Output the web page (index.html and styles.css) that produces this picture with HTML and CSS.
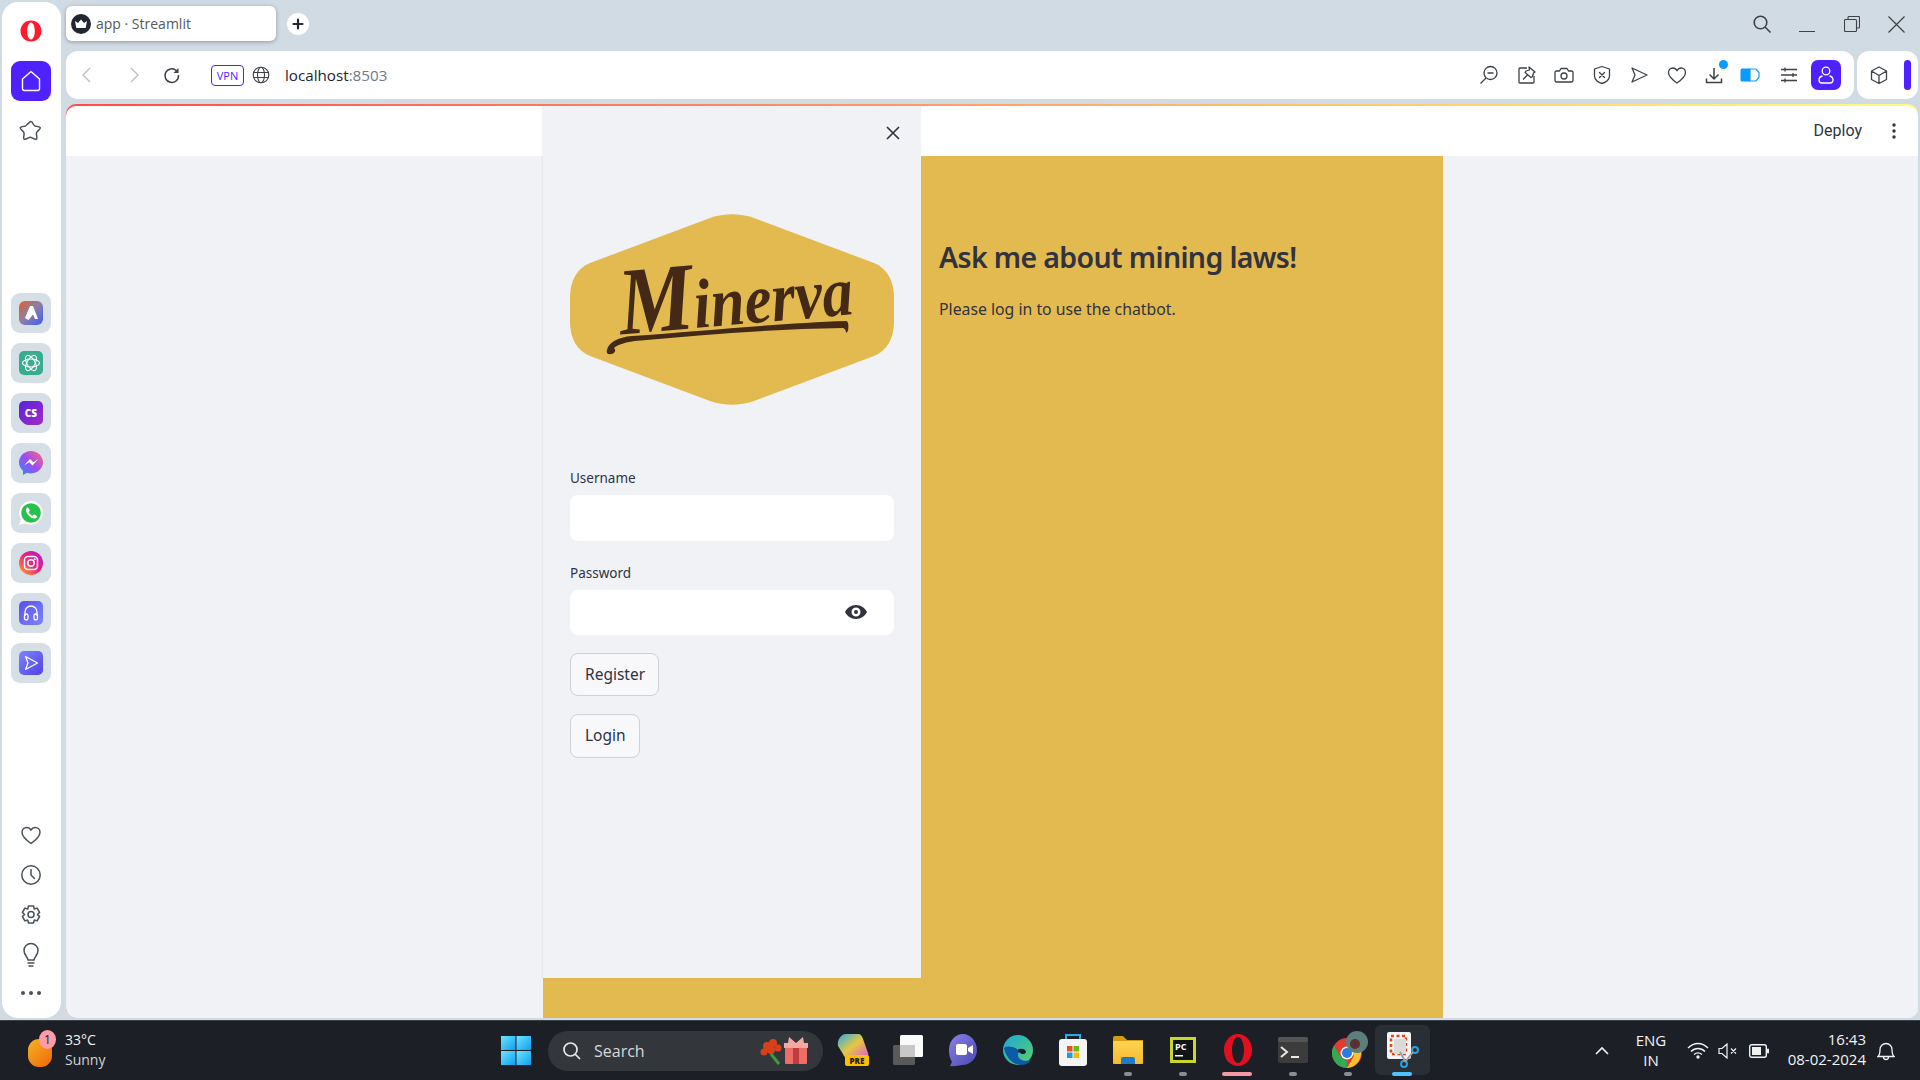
FILE: index.html
```html
<!DOCTYPE html>
<html lang="en">
<head>
  <meta charset="UTF-8">
  <title>app · Streamlit</title>
  <meta name="viewport" content="width=device-width, initial-scale=1.0">
  <link rel="stylesheet" href="styles.css">
</head>
<body>

<svg class="defs" width="0" height="0">
  <defs>
    <linearGradient id="gAria" x1="0" y1="0" x2="1" y2="1"><stop offset="0" stop-color="#e0602c"/><stop offset=".5" stop-color="#8a7fa8"/><stop offset="1" stop-color="#3a5cff"/></linearGradient>
    <linearGradient id="gCs" x1="0" y1="0" x2="1" y2="1"><stop offset="0" stop-color="#5a22d8"/><stop offset="1" stop-color="#a02ac8"/></linearGradient>
    <linearGradient id="gMsg" x1="0" y1="1" x2="1" y2="0"><stop offset="0" stop-color="#2a8cff"/><stop offset=".5" stop-color="#a04cf0"/><stop offset="1" stop-color="#ff6a70"/></linearGradient>
    <linearGradient id="gIg" x1="0" y1="1" x2="1" y2="0"><stop offset="0" stop-color="#ffb020"/><stop offset=".5" stop-color="#f0207c"/><stop offset="1" stop-color="#a020d8"/></linearGradient>
    <linearGradient id="gBlue" x1="0" y1="0" x2="1" y2="1"><stop offset="0" stop-color="#5a50f0"/><stop offset="1" stop-color="#7c84ff"/></linearGradient>
    <linearGradient id="gBlue2" x1="0" y1="0" x2="1" y2="1"><stop offset="0" stop-color="#7c84ff"/><stop offset="1" stop-color="#5240e8"/></linearGradient>
    <linearGradient id="gWin" x1="0" y1="0" x2="1" y2="1"><stop offset="0" stop-color="#6fe6ff"/><stop offset="1" stop-color="#0d9cf0"/></linearGradient>
    <linearGradient id="gCop" x1="0" y1="0" x2="1" y2="1"><stop offset="0" stop-color="#2aa8f0"/><stop offset=".5" stop-color="#e8c83c"/><stop offset="1" stop-color="#d85ce0"/></linearGradient>
    <linearGradient id="gMeet" x1="0" y1="0" x2="1" y2="1"><stop offset="0" stop-color="#8a80e8"/><stop offset="1" stop-color="#4a48b0"/></linearGradient>
    <linearGradient id="gEdge" x1="0" y1="0" x2="1" y2="1"><stop offset="0" stop-color="#1ea8d8"/><stop offset="1" stop-color="#58d068"/></linearGradient>
    <linearGradient id="gFolder" x1="0" y1="0" x2="0" y2="1"><stop offset="0" stop-color="#ffd452"/><stop offset="1" stop-color="#f6b92c"/></linearGradient>
  </defs>
</svg>

<div class="screen">
  <!-- opera rail -->
  <nav class="rail">
    <div class="rail-logo">
      <svg width="26" height="26" viewBox="0 0 26 26"><path fill="#ff1b2d" fill-rule="evenodd" d="M13 2.500C6.900 2.500 2.500 7.200 2.500 13s4.400 10.500 10.500 10.500S23.500 18.800 23.500 13 19.100 2.500 13 2.500zm0 2c2.200 0 3.800 3.800 3.800 8.500s-1.600 8.500-3.800 8.500-3.800-3.800-3.800-8.500 1.600-8.500 3.800-8.500z"/></svg>
    </div>
    <div class="rail-home">
      <svg width="22" height="24" viewBox="0 0 22 24" fill="none" stroke="#fff" stroke-width="1.400" stroke-linejoin="round"><path d="M2.500 10 11 2.500 19.500 10v9.500a2 2 0 0 1-2 2h-13a2 2 0 0 1-2-2z"/></svg>
    </div>
    <div class="rail-icon rail-star">
      <svg width="24" height="24" viewBox="0 0 24 24" fill="none" stroke="#4a515a" stroke-width="1.500" stroke-linejoin="round"><path d="M12 2.500c1 0 1.500 1 2.300 2.800.6 1.300 1 1.700 2.300 1.900 2.500.4 4.400.5 4.700 1.500.3 1-1.200 2.100-3 3.800-.9.900-1.100 1.400-.9 2.600.4 2.500.9 4.500 0 5.100-.9.600-2.600-.4-4.800-1.600-1.100-.6-1.600-.6-2.700 0-2.200 1.200-3.900 2.200-4.800 1.600-.9-.6-.4-2.600 0-5.100.2-1.200 0-1.700-.9-2.600-1.800-1.700-3.300-2.800-3-3.800.3-1 2.200-1.100 4.700-1.500 1.300-.2 1.700-.6 2.300-1.900C10.500 3.500 11 2.500 12 2.500z"/></svg>
    </div>

    <div class="rail-apps">
      <div class="app-tile"><svg width="24" height="24" viewBox="0 0 24 24"><rect width="24" height="24" rx="6" fill="url(#gAria)"/><path fill="#fff" d="M11 5h3l5 13h-3l-2-4.500L9.500 19 6 17z"/></svg></div>
      <div class="app-tile"><svg width="24" height="24" viewBox="0 0 24 24"><rect width="24" height="24" rx="5" fill="#36ad8e"/><g fill="none" stroke="#fff" stroke-width="1.100"><ellipse cx="12" cy="12" rx="8.500" ry="4"/><ellipse cx="12" cy="12" rx="8.500" ry="4" transform="rotate(60 12 12)"/><ellipse cx="12" cy="12" rx="8.500" ry="4" transform="rotate(120 12 12)"/></g></svg></div>
      <div class="app-tile"><svg width="24" height="24" viewBox="0 0 24 24"><path fill="url(#gCs)" d="M5 0h14a5 5 0 0 1 5 5v14a5 5 0 0 1-5 5H9c-3 0-9-5-9-9V5a5 5 0 0 1 5-5z"/><text class="cs-text" x="12" y="16">CS</text></svg></div>
      <div class="app-tile"><svg width="24" height="24" viewBox="0 0 24 24"><path fill="url(#gMsg)" d="M12 0C5.400 0 0 5 0 11.300c0 3.400 1.500 6.300 4 8.400V24l4-2.200c1.300.4 2.600.6 4 .6 6.600 0 12-5 12-11.100S18.600 0 12 0z"/><path fill="#fff" d="m5 14.500 6-6.500 3.300 3.300L19.500 8l-6 6.500-3.300-3.300z"/></svg></div>
      <div class="app-tile"><svg width="24" height="24" viewBox="0 0 24 24"><path fill="#fff" d="M12 0a11.800 11.800 0 0 0-10 18L0 24l6.300-1.700A11.900 11.900 0 1 0 12 0z"/><circle cx="12" cy="12" r="9.800" fill="#27c24c"/><path fill="#fff" d="M8.500 6.500c-.5 0-1.500.8-1.500 2.500 0 3.500 4.500 8.500 8.500 8.500 1.500 0 2.500-1 2.500-2 0-.5-2.500-2-3-2s-1 1.200-1.500 1.200c-1 0-3.700-2.500-3.700-3.700 0-.5 1-1 1-1.500s-1.500-3-2.300-3z"/></svg></div>
      <div class="app-tile"><svg width="24" height="24" viewBox="0 0 24 24"><circle cx="12" cy="12" r="12" fill="url(#gIg)"/><rect x="5.500" y="5.500" width="13" height="13" rx="3.500" fill="none" stroke="#fff" stroke-width="1.500"/><circle cx="12" cy="12" r="3.200" fill="none" stroke="#fff" stroke-width="1.500"/><circle cx="15.800" cy="8.200" r=".9" fill="#fff"/></svg></div>
      <div class="app-tile"><svg width="24" height="24" viewBox="0 0 24 24"><rect width="24" height="24" rx="5" fill="url(#gBlue)"/><g fill="none" stroke="#fff" stroke-width="1.300"><path d="M6 15v-4a6 6 0 0 1 12 0v4"/><rect x="5.500" y="13" width="3.500" height="6" rx="1.700"/><rect x="15" y="13" width="3.500" height="6" rx="1.700"/></g></svg></div>
      <div class="app-tile"><svg width="24" height="24" viewBox="0 0 24 24"><rect width="24" height="24" rx="5" fill="url(#gBlue2)"/><path fill="none" stroke="#fff" stroke-width="1.300" stroke-linejoin="round" d="m6.500 5.500 12 6.500-12 6.500 2.500-6.500z"/></svg></div>
    </div>

    <div class="rail-bottom">
      <div class="rail-icon"><svg width="24" height="24" viewBox="0 0 24 24" fill="none" stroke="#4a515a" stroke-width="1.500" stroke-linejoin="round"><path d="M12 20.500C7 17 3 13.500 3 9.300 3 6.400 5.200 4.500 7.700 4.500c1.900 0 3.400 1 4.300 2.700.9-1.700 2.400-2.700 4.300-2.700 2.500 0 4.700 1.900 4.700 4.800 0 4.200-4 7.700-9 11.200z"/></svg></div>
      <div class="rail-icon"><svg width="24" height="24" viewBox="0 0 24 24" fill="none" stroke="#4a515a" stroke-width="1.500" stroke-linecap="round"><circle cx="12" cy="12" r="9.200"/><path d="M12 6.500V12l3.500 3.500"/></svg></div>
      <div class="rail-icon"><svg width="24" height="24" viewBox="0 0 24 24" fill="none" stroke="#4a515a" stroke-width="1.500" stroke-linejoin="round"><path d="M9.500 3h5l.8 3 2.800-.9 2.500 4.300-2.100 2.100 2.100 2.100-2.500 4.300-2.800-.9-.8 3h-5l-.8-3-2.800.9-2.500-4.300 2.100-2.100-2.100-2.100 2.500-4.300 2.800.9z"/><circle cx="12" cy="11.500" r="3"/></svg></div>
      <div class="rail-icon"><svg width="24" height="28" viewBox="0 0 24 28" fill="none" stroke="#4a515a" stroke-width="1.500" stroke-linecap="round"><path d="M9 19c0-3-4-4.500-4-9.500a7 7 0 0 1 14 0c0 5-4 6.500-4 9.500z"/><path d="M9 22h6M10 25h4"/></svg></div>
      <div class="rail-icon rail-dots"><i></i><i></i><i></i></div>
    </div>
  </nav>

  <div class="browser">
    <div class="tabstrip">
      <div class="tab">
        <svg class="favicon" width="20" height="20" viewBox="0 0 20 20"><circle cx="10" cy="10" r="10" fill="#22262e"/><path fill="#fff" d="M4 7l3 2 3-3.500L13 9l3-2-1.300 7H5.300z"/></svg>
        <span>app · Streamlit</span>
      </div>
      <div class="new-tab">
        <svg width="12" height="12" viewBox="0 0 12 12" stroke="#22262e" stroke-width="2.200" stroke-linecap="round"><path d="M6 1.500v9M1.500 6h9"/></svg>
      </div>
      <div class="window-btns">
        <div class="win-btn"><svg width="20" height="20" viewBox="0 0 20 20" fill="none" stroke="#3c4248" stroke-width="1.600"><circle cx="8.500" cy="8.500" r="6.300"/><path d="m13 13 5.500 5.500"/></svg></div>
        <div class="win-btn"><svg width="16" height="16" viewBox="0 0 16 16" fill="none" stroke="#3c4248" stroke-width="1"><path d="M0 15.500h16"/></svg></div>
        <div class="win-btn"><svg width="16" height="16" viewBox="0 0 16 16" fill="none" stroke="#3c4248" stroke-width="1.100"><rect x=".5" y="3.500" width="12" height="12" rx="1"/><path d="M4 3.500V1.500a1 1 0 0 1 1-1h9.500a1 1 0 0 1 1 1V11a1 1 0 0 1-1 1h-2"/></svg></div>
        <div class="win-btn"><svg width="17" height="17" viewBox="0 0 17 17" fill="none" stroke="#3c4248" stroke-width="1.200"><path d="m.5.500 16 16M16.500.500l-16 16"/></svg></div>
      </div>
    </div>

    <div class="toolbar-row">
      <div class="addressbar">
        <div class="nav-btn nav-back"><svg width="24" height="24" viewBox="0 0 24 24" fill="none" stroke="#b8bec4" stroke-width="1.300"><path d="m15 5-7 7 7 7"/></svg></div>
        <div class="nav-btn nav-fwd"><svg width="24" height="24" viewBox="0 0 24 24" fill="none" stroke="#b8bec4" stroke-width="1.300"><path d="m9 5 7 7-7 7"/></svg></div>
        <div class="nav-btn nav-reload"><svg width="24" height="24" viewBox="0 0 24 24" fill="none" stroke="#3c4248" stroke-width="1.500"><path d="M16.500 7.800A6.800 6.800 0 1 0 18.500 12"/><path fill="#3c4248" stroke="none" d="M18.500 5v5h-5z"/></svg></div>
        <div class="vpn-tag">VPN</div>
        <svg class="globe" width="18" height="18" viewBox="0 0 18 18" fill="none" stroke="#3c4248" stroke-width="1.100"><circle cx="9" cy="9" r="7.800"/><ellipse cx="9" cy="9" rx="3.500" ry="7.800"/><path d="M1.500 6.500h15M1.500 11.500h15"/></svg>
        <div class="url">localhost<span>:8503</span></div>
        <div class="tools">
          <div class="tool"><svg width="20" height="20" viewBox="0 0 20 20" fill="none" stroke="#3c4248" stroke-width="1.300"><circle cx="11.500" cy="8" r="6.500"/><path d="M8.500 8h6M7 13 1.500 18.500"/></svg></div>
          <div class="tool"><svg width="20" height="20" viewBox="0 0 20 20" fill="none" stroke="#3c4248" stroke-width="1.300" stroke-linejoin="round"><path d="M10 3H3a1 1 0 0 0-1 1v13a1 1 0 0 0 1 1h13a1 1 0 0 0 1-1v-6"/><path d="m12 2 6 5-1.500 1-1 3.500-1.500 1L8 7.500l1-1.500 3.500-1zM10.500 10 6 14.500"/></svg></div>
          <div class="tool"><svg width="20" height="20" viewBox="0 0 20 20" fill="none" stroke="#3c4248" stroke-width="1.300" stroke-linejoin="round"><path d="M2.500 6h3l1.500-2.500h6L14.500 6h3a1.500 1.500 0 0 1 1.500 1.500v8a1.500 1.500 0 0 1-1.500 1.500h-15A1.500 1.500 0 0 1 1 15.500v-8A1.500 1.500 0 0 1 2.500 6z"/><circle cx="10" cy="11" r="3"/></svg></div>
          <div class="tool"><svg width="20" height="20" viewBox="0 0 20 20" fill="none" stroke="#3c4248" stroke-width="1.300" stroke-linejoin="round"><path d="M10 1.500 17.500 4v7c0 3.500-3.500 6.500-7.500 7.500C6 17.500 2.500 14.500 2.500 11V4z"/><path stroke-linecap="round" d="m7.500 7.500 5 5M12.500 7.500l-5 5"/></svg></div>
          <div class="tool"><svg width="20" height="20" viewBox="0 0 20 20" fill="none" stroke="#3c4248" stroke-width="1.300" stroke-linejoin="round"><path d="m3 3 15 7-15 7 3-7z"/></svg></div>
          <div class="tool"><svg width="20" height="20" viewBox="0 0 20 20" fill="none" stroke="#3c4248" stroke-width="1.300" stroke-linejoin="round"><path d="M10 18C5 14.500 1.500 11.500 1.500 7.500c0-2.500 2-4.500 4.300-4.500 1.800 0 3.300 1 4.200 2.700C10.900 4 12.400 3 14.200 3c2.300 0 4.300 2 4.300 4.500 0 4-3.500 7-8.500 10.500z"/></svg></div>
          <div class="tool tool-dl"><svg width="20" height="20" viewBox="0 0 20 20" fill="none" stroke="#3c4248" stroke-width="1.500"><path d="M10 3v11M5.500 9.500 10 14l4.500-4.500M2.500 13.500v4h15v-4"/></svg><i class="dl-dot"></i></div>
          <div class="tool tool-vpnbat"><svg width="20" height="16" viewBox="0 0 20 16"><path fill="#0a9bff" d="M2 1.500h8v13H2a1.500 1.500 0 0 1-1.500-1.500V3A1.500 1.500 0 0 1 2 1.500z"/><path fill="#fff" stroke="#0a9bff" stroke-width="1.200" d="M10 2h6l3 3.500v5L16 14h-6z"/></svg></div>
          <div class="tool"><svg width="18" height="16" viewBox="0 0 18 16" fill="none" stroke="#3c4248" stroke-width="1.300"><path d="M1 2.500h16M1 8h16M1 13.500h16M5 .5v4M13 6v4M5 11.500v4" /></svg></div>
          <div class="profile"><svg width="20" height="20" viewBox="0 0 20 20" fill="none" stroke="#fff" stroke-width="1.300"><circle cx="10" cy="6" r="3.800"/><path d="M6.500 11C4 11.500 3 13 3 15c0 2 1 3 3 3h8c2 0 3-1 3-3 0-2-1-3.500-3.500-4"/></svg></div>
        </div>
      </div>
      <div class="sidebox">
        <svg width="20" height="20" viewBox="0 0 20 20" fill="none" stroke="#3c4248" stroke-width="1.300" stroke-linejoin="round"><path d="m10 2 7.500 4v8.500L10 18.500l-7.500-4V6zM2.500 6 10 10.500 17.500 6M10 10.500v8"/></svg>
        <i class="sidebox-bar"></i>
      </div>
    </div>

    <!-- streamlit page -->
    <div class="page">
      <header class="st-header">
        <span class="deploy">Deploy</span>
        <svg class="kebab" width="4" height="16" viewBox="0 0 4 16" fill="#31333f"><circle cx="2" cy="2" r="1.700"/><circle cx="2" cy="8" r="1.700"/><circle cx="2" cy="14" r="1.700"/></svg>
      </header>
      <main class="st-body">
        <section class="st-main">
          <h1>Ask me about mining laws!</h1>
          <p>Please log in to use the chatbot.</p>
        </section>
      </main>

      <aside class="st-sidebar">
        <div class="close-row">
          <svg width="14" height="14" viewBox="0 0 14 14" fill="none" stroke="#31333f" stroke-width="1.700"><path d="m1 1 12 12M13 1 1 13"/></svg>
        </div>
        <svg class="logo" width="324" height="191" viewBox="0 0 324 191">
          <path fill="#e3ba50" d="M140 4c15-5 29-5 44 0L304 49c13 5 20 18 20 34v25c0 16-7 29-20 34L184 187c-15 5-29 5-44 0L20 142C7 137 0 124 0 108V83c0-16 7-29 20-34z"/>
          <g fill="#452917">
            <text class="logo-text" x="50" y="110" textLength="234" lengthAdjust="spacingAndGlyphs" transform="rotate(-5 170 100)"><tspan class="logo-cap">M</tspan>inerva</text>
            <path d="M37 136c1-7 11-13 25-14 70-5 150-13 214-15 2 0 3 3 2 10l-2 2c0-3-1-4-3-5-70 1-140 7-208 13-8 1-16 3-21 7 3 3 0 6-3 6-3 1-5-1-4-4z"/>
          </g>
        </svg>
        <label class="field-label">Username</label>
        <div class="field field-user"></div>
        <label class="field-label">Password</label>
        <div class="field field-pass">
          <svg width="22" height="14" viewBox="0 0 22 14"><path fill="#31333f" fill-rule="evenodd" d="M11 0C6 0 2 3 0 7c2 4 6 7 11 7s9-3 11-7c-2-4-6-7-11-7zm0 11.500a4.500 4.500 0 1 1 0-9 4.500 4.500 0 0 1 0 9zM11 5a2 2 0 1 0 0 4 2 2 0 0 0 0-4z"/></svg>
        </div>
        <button class="st-btn btn-register">Register</button>
        <button class="st-btn btn-login">Login</button>
      </aside>
    </div>
  </div>
</div>

<footer class="taskbar">
  <div class="weather">
    <div class="sun"><i>1</i></div>
    <div class="weather-text">
      <div>33°C</div>
      <div class="sunny">Sunny</div>
    </div>
  </div>

  <svg class="winlogo" width="30" height="29" viewBox="0 0 30 29"><rect width="14.500" height="14" fill="url(#gWin)"/><rect x="15.500" width="14.500" height="14" fill="url(#gWin)"/><rect y="15" width="14.500" height="14" fill="url(#gWin)"/><rect x="15.500" y="15" width="14.500" height="14" fill="url(#gWin)"/></svg>

  <div class="searchbox">
    <svg width="20" height="20" viewBox="0 0 20 20" fill="none" stroke="#e8e8e8" stroke-width="1.700"><circle cx="8.500" cy="8.500" r="6.500"/><path d="m13 13 5 5"/></svg>
    <span>Search</span>
    <svg class="gift" width="50" height="30" viewBox="0 0 50 30"><g fill="#d8401c"><circle cx="8" cy="10" r="4"/><circle cx="14" cy="7" r="4"/><circle cx="5" cy="16" r="3.500"/><circle cx="12" cy="14" r="4"/><circle cx="19" cy="12" r="3.500"/></g><path d="M12 18l8 10" stroke="#3f9a3a" stroke-width="3"/><rect x="26" y="8" width="22" height="20" rx="1" fill="#ef6d68"/><rect x="34" y="8" width="6" height="20" fill="#c23a3a"/><rect x="25" y="7" width="24" height="5" fill="#f5a8a0"/><path d="M37 7 30 1l-1 6zM37 7l7-6 1 6z" fill="#f5a8a0"/></svg>
  </div>

  <div class="dock">
    <div class="dock-item"><svg width="32" height="36" viewBox="0 0 32 36"><path fill="url(#gCop)" d="M9 2h12c3 0 4 2 5 5l5 14c1 3-1 5-4 5H12c-3 0-5-1-6-4L1 14C0 8 4 2 9 2z"/><rect x="8" y="23" width="24" height="11" rx="2" fill="#fbc100"/><text class="pre-text" x="20" y="32">PRE</text></svg></div>
    <div class="dock-item"><svg width="30" height="30" viewBox="0 0 30 30"><rect x="0" y="10" width="22" height="20" rx="1.500" fill="#5a5a5a"/><rect x="7" y="0" width="23" height="22" rx="1.500" fill="#fafafa"/><rect x="7" y="10" width="15" height="12" fill="#c8c8c8"/></svg></div>
    <div class="dock-item"><svg width="30" height="34" viewBox="0 0 30 34"><path fill="url(#gMeet)" d="M15 1C7 1 1 8 1 17c0 5 1 9 3 12l-2 4c5 1 9-1 12-1 9 0 15-7 15-15S23 1 15 1z"/><rect x="8" y="11" width="11" height="11" rx="2" fill="#fff"/><path fill="#fff" d="m20 15 5-3v9l-5-3z"/></svg></div>
    <div class="dock-item"><svg width="30" height="30" viewBox="0 0 30 30"><circle cx="15" cy="15" r="15" fill="url(#gEdge)"/><path fill="#0c5aa8" d="M1 13c2 9 8 17 17 17 4 0 8-2 10-5-6 2-13 0-13-5 0-2 1-3 2-4-5-4-12-6-16-3z"/><path fill="#1c2026" d="M16 14c4-1 7 1 7 3s-4 3-6 1-3-3-1-4z"/></svg></div>
    <div class="dock-item"><svg width="30" height="34" viewBox="0 0 30 34"><path fill="none" stroke="#2aa8e8" stroke-width="2" d="M8 7V2h14v5"/><rect x="1" y="6" width="28" height="27" rx="3" fill="#f4f4f4"/><rect x="9" y="13" width="5.500" height="5.500" fill="#e8501c"/><rect x="15.500" y="13" width="5.500" height="5.500" fill="#6cb820"/><rect x="9" y="19.500" width="5.500" height="5.500" fill="#1c9ce8"/><rect x="15.500" y="19.500" width="5.500" height="5.500" fill="#fbb800"/></svg></div>
    <div class="dock-item"><svg width="30" height="28" viewBox="0 0 30 28"><path fill="#d49a10" d="M0 2a2 2 0 0 1 2-2h8l4 4h16v6H0z"/><rect y="5" width="30" height="23" rx="1" fill="url(#gFolder)"/><path fill="#1c7cc8" d="M8 28v-5a2 2 0 0 1 2-2h10a2 2 0 0 1 2 2v5z"/></svg></div>
    <div class="dock-item"><svg width="26" height="26" viewBox="0 0 26 26"><rect width="26" height="26" fill="#c8d828"/><rect x="3" y="3" width="20" height="20" fill="#101418"/><text class="pc-text" x="5" y="13">PC</text><rect x="5" y="18" width="8" height="1.500" fill="#fff"/></svg></div>
    <div class="dock-item"><svg width="28" height="32" viewBox="0 0 28 32"><path fill="#e01020" fill-rule="evenodd" d="M14 0C6 0 0 7 0 16s6 16 14 16 14-7 14-16S22 0 14 0zm0 3c3.500 0 6 6 6 13s-2.500 13-6 13-6-6-6-13 2.500-13 6-13z"/></svg></div>
    <div class="dock-item"><svg width="30" height="26" viewBox="0 0 30 26"><rect width="30" height="26" rx="2" fill="#3c3c3c"/><rect width="30" height="5" rx="2" fill="#555"/><path fill="none" stroke="#e8e8e8" stroke-width="2" d="m3 10 6 5-6 5"/><path stroke="#e8e8e8" stroke-width="2" d="M13 20h8"/></svg></div>
    <div class="dock-item dock-chrome"><svg width="38" height="38" viewBox="0 0 38 38"><g transform="translate(0 6)"><circle cx="15" cy="16" r="15" fill="#e33b2e"/><path fill="#34a853" d="M15 31A15 15 0 0 1 2 8.500L9 20l6 4z"/><path fill="#fbc02d" d="M15 31l7-12-2-5h9a15 15 0 0 1-14 17z"/><circle cx="15" cy="16" r="6.500" fill="#fff"/><circle cx="15" cy="16" r="5" fill="#2a7be4"/></g><circle cx="25" cy="11" r="11" fill="#5c7f7c"/><circle cx="23" cy="13" r="5" fill="#5a3030"/></svg></div>
    <div class="dock-item dock-active"><svg width="32" height="36" viewBox="0 0 32 36"><rect x="0" y="0" width="24" height="27" rx="2" fill="#f4f4f4"/><rect x="4" y="4" width="15" height="18" fill="none" stroke="#d84a20" stroke-width="2.500" stroke-dasharray="3 2.500"/><rect x="7" y="7" width="12" height="15" fill="#dadada"/><g fill="none" stroke="#2aa0e0" stroke-width="2"><circle cx="28" cy="18" r="3"/><circle cx="17" cy="32" r="3"/><path d="M26 20 18 30M13 20l5 9" stroke="#9aa0a6"/></g></svg></div>
  </div>

  <div class="tray">
    <svg class="chevron" width="14" height="9" viewBox="0 0 14 9" fill="none" stroke="#f2f2f2" stroke-width="1.600"><path d="m1 8 6-6 6 6"/></svg>
    <div class="lang"><div>ENG</div><div>IN</div></div>
    <svg class="tray-wifi" width="22" height="17" viewBox="0 0 22 17" fill="none" stroke="#f2f2f2" stroke-width="1.400"><path d="M1 6c6-6 14-6 20 0M4 9.500c4-4 10-4 14 0M7 12.500c2.500-2 5.500-2 8 0"/><circle cx="11" cy="15" r="1" fill="#f2f2f2"/></svg>
    <svg class="tray-vol" width="20" height="16" viewBox="0 0 20 16" fill="none" stroke="#f2f2f2" stroke-width="1.200"><path d="M1 5.500h3L9 1v14l-5-4.500H1zM13 5.500l5 5M18 5.500l-5 5"/></svg>
    <svg class="tray-bat" width="20" height="14" viewBox="0 0 20 14"><rect x=".7" y=".7" width="16.600" height="12.600" rx="2" fill="none" stroke="#f2f2f2" stroke-width="1.400"/><rect x="3" y="3" width="9" height="8" fill="#f2f2f2"/><rect x="18" y="4.500" width="2" height="5" rx="1" fill="#f2f2f2"/></svg>
    <div class="clock"><div>16:43</div><div>08-02-2024</div></div>
    <svg class="tray-bell" width="18" height="20" viewBox="0 0 18 20" fill="none" stroke="#f2f2f2" stroke-width="1.300"><path d="M1 15.500c2-2 2-4 2-7a6 6 0 0 1 12 0c0 3 0 5 2 7zM6.500 16a2.500 2.500 0 0 0 5 0"/></svg>
  </div>
</footer>

</body>
</html>
```

FILE: styles.css
```css
* {
  box-sizing: border-box;
}
html, body {
  margin: 0;
  height: 1080px;
  overflow: hidden;
}
body {
  background: #d1dbe4;
  font-family: "Open Sans", sans-serif;
  color: #31333f;
}
svg {
  display: block;
  flex-shrink: 0;
}
.defs {
  position: absolute;
}

.screen {
  display: flex;
  height: 1020px;
}

/* left rail */
.rail {
  width: 59px;
  height: 1016px;
  margin: 2px 0 0 2px;
  padding: 16px 1px 0 0;
  background: #fff;
  border-radius: 16px;
  display: flex;
  flex-direction: column;
  align-items: center;
}
.rail-logo {
  height: 26px;
}
.rail-home {
  width: 40px;
  height: 40px;
  margin-top: 17px;
  background: #5021ff;
  border-radius: 9px;
  display: flex;
  align-items: center;
  justify-content: center;
}
.rail-icon {
  width: 40px;
  height: 40px;
  display: flex;
  align-items: center;
  justify-content: center;
}
.rail-star {
  margin-top: 10px;
}
.rail-apps {
  margin-top: 142px;
  display: flex;
  flex-direction: column;
  gap: 10px;
}
.app-tile {
  width: 40px;
  height: 40px;
  background: #d5dfe5;
  border-radius: 9px;
  display: flex;
  align-items: center;
  justify-content: center;
}
.cs-text {
  font: 800 10px "Open Sans", sans-serif;
  fill: #fff;
  text-anchor: middle;
}
.rail-bottom {
  margin-top: auto;
  padding-bottom: 5px;
}
.rail-dots {
  gap: 4px;
  margin-top: -2px;
}
.rail-dots i {
  width: 4px;
  height: 4px;
  border-radius: 50%;
  background: #4a515a;
}

/* browser chrome */
.browser {
  width: 1854px;
  margin-left: 5px;
  display: flex;
  flex-direction: column;
}
.tabstrip {
  height: 51px;
  display: flex;
  align-items: flex-start;
}
.tab {
  width: 210px;
  height: 35px;
  margin-top: 6px;
  padding-left: 5px;
  background: #fff;
  border-radius: 6px;
  box-shadow: 0 1px 4px rgba(0,0,0,0.3);
  display: flex;
  align-items: center;
  gap: 5px;
  font-size: 14px;
  color: #55595e;
}
.new-tab {
  width: 22px;
  height: 22px;
  margin: 13px 0 0 11px;
  background: #fff;
  border-radius: 50%;
  display: flex;
  align-items: center;
  justify-content: center;
}
.window-btns {
  margin-left: auto;
  padding-right: 1px;
  display: flex;
}
.win-btn {
  width: 45px;
  height: 48px;
  display: flex;
  align-items: center;
  justify-content: center;
}
.toolbar-row {
  height: 48px;
  display: flex;
  gap: 3px;
}
.addressbar {
  width: 1788px;
  background: #fff;
  border-radius: 12px;
  padding: 0 13px 0 9px;
  display: flex;
  align-items: center;
}
.nav-btn {
  width: 24px;
  height: 24px;
}
.nav-fwd {
  margin-left: 23px;
}
.nav-reload {
  margin-left: 14px;
}
.vpn-tag {
  width: 33px;
  height: 21px;
  margin-left: 27px;
  border: 1px solid #5021ff;
  border-radius: 4px;
  color: #5021ff;
  font-size: 11px;
  line-height: 19px;
  text-align: center;
}
.globe {
  margin-left: 8px;
}
.url {
  margin-left: 15px;
  font-size: 15.200px;
  color: #22262b;
}
.url span {
  color: #6c7a89;
}
.tools {
  margin-left: auto;
  display: flex;
  align-items: center;
}
.tool {
  width: 37.500px;
  height: 30px;
  position: relative;
  display: flex;
  align-items: center;
  justify-content: center;
}
.tool-vpnbat {
  padding-right: 3px;
}
.dl-dot {
  position: absolute;
  top: 0;
  right: 5px;
  width: 9px;
  height: 9px;
  border-radius: 50%;
  background: #0a9bff;
}
.profile {
  width: 30px;
  height: 30px;
  margin-left: 3px;
  background: #5021ff;
  border-radius: 7px;
  display: flex;
  align-items: center;
  justify-content: center;
}
.sidebox {
  width: 61px;
  background: #fff;
  border-radius: 12px;
  padding-left: 12px;
  display: flex;
  align-items: center;
  gap: 15px;
}
.sidebox-bar {
  width: 7px;
  height: 30px;
  background: #5021ff;
  border-radius: 4px;
}

/* streamlit */
.page {
  position: relative;
  width: 1852px;
  height: 914px;
  margin-top: 5px;
  padding-top: 2px;
  background: linear-gradient(90deg, #ff4b4b, #fffd80);
  border-radius: 10px;
  overflow: hidden;
  font-family: "Noto Sans", sans-serif;
}
.st-header {
  height: 50px;
  background: #fff;
  border-radius: 10px 10px 0 0;
  display: flex;
  align-items: center;
  justify-content: flex-end;
  padding-right: 22px;
}
.deploy {
  font-family: Roboto, sans-serif;
  font-size: 16px;
  margin: -2px 30px 0 0;
}
.st-body {
  display: flex;
  justify-content: center;
  height: 862px;
  padding-left: 2px;
  background: #f0f2f6;
}
.st-main {
  width: 900px;
  background: #e3ba50;
  padding: 80px 0 0 396px;
}
.st-main h1 {
  margin: 0;
  font-size: 28.500px;
  font-weight: 600;
  line-height: 42px;
  letter-spacing: -0.640px;
}
.st-main p {
  margin: 19px 0 0;
  font-size: 15.800px;
  line-height: 24px;
}
.st-sidebar {
  position: absolute;
  left: 477px;
  top: 2px;
  width: 378px;
  height: 872px;
  padding: 0 27px;
  background: #f0f2f6;
  box-shadow: -1px 0 2px rgba(0,0,0,0.06);
  display: flex;
  flex-direction: column;
  align-items: flex-start;
}
.close-row {
  width: calc(100% + 6px);
  height: 54px;
  display: flex;
  align-items: center;
  justify-content: flex-end;
}
.logo {
  margin-top: 54px;
}
.field-label {
  margin-top: 22px;
  height: 20px;
  line-height: 20px;
  font-size: 13.500px;
}
.logo + .field-label {
  margin-top: 63px;
}
.logo-text {
  font-family: "Liberation Serif", serif;
  font-size: 70px;
  font-weight: 700;
  font-style: italic;
}
.logo-cap {
  font-size: 96px;
}
.field {
  width: 324px;
  margin-top: 7px;
  background: #fff;
  border-radius: 8px;
}
.field-user {
  height: 46px;
  margin-top: 7px;
}
.field-pass {
  height: 45px;
  padding-right: 27px;
  display: flex;
  align-items: center;
  justify-content: flex-end;
}
.field-pass svg {
  margin-top: -1px;
}
.st-btn {
  height: 43px;
  margin-top: 18px;
  padding: 0 14px 2px;
  background: #f8f8fb;
  border: 1px solid #d0d0d5;
  border-radius: 8px;
  color: #31333f;
  font-family: "Noto Sans", sans-serif;
  font-size: 15.500px;
}
.btn-register {
  width: 89px;
}
.btn-login {
  width: 70px;
  height: 44px;
}

/* taskbar */
.taskbar {
  height: 60px;
  background: #1c2026;
  border-top: 1px solid #3b4047;
  display: flex;
  align-items: center;
  color: #f2f2f2;
  font-family: "Open Sans", sans-serif;
  font-size: 14px;
  position: relative;
}
.weather {
  width: 501px;
  padding-left: 28px;
  display: flex;
  align-items: center;
  gap: 13px;
}
.sun {
  width: 24px;
  height: 28px;
  margin-top: 4px;
  background: linear-gradient(135deg, #f4b420, #f0660c);
  border-radius: 11px;
  position: relative;
}
.sun i {
  position: absolute;
  top: -9px;
  left: 11px;
  width: 17px;
  height: 19px;
  border-radius: 50%;
  background: #ff9ca8;
  color: #222;
  font-size: 12px;
  font-style: normal;
  line-height: 19px;
  text-align: center;
}
.weather-text {
  line-height: 20px;
  margin-top: -2px;
}
.sunny {
  color: #d0d2d4;
}
.searchbox {
  width: 275px;
  height: 40px;
  margin-left: 17px;
  padding: 0 14px 0 14px;
  background: #33373c;
  border-radius: 20px;
  display: flex;
  align-items: center;
  gap: 12px;
  font-size: 16px;
  color: #d8d8d8;
}
.gift {
  margin-left: auto;
}
.dock {
  margin-left: 2px;
  margin-top: -2px;
  display: flex;
}
.dock-item {
  width: 55px;
  height: 50px;
  display: flex;
  align-items: center;
  justify-content: center;
  position: relative;
}
.dock-chrome svg {
  margin-left: 6px;
}
.dock-item:nth-child(n+6):not(:nth-child(8)):not(:nth-child(11))::after {
  content: "";
  position: absolute;
  bottom: -1px;
  left: 24px;
  width: 8px;
  height: 4px;
  border-radius: 2px;
  background: #8a8d91;
}
.dock-item:nth-child(8)::after {
  content: "";
  position: absolute;
  bottom: -1px;
  left: 12px;
  width: 30px;
  height: 4px;
  border-radius: 2px;
  background: #f59aa4;
}
.dock-active {
  background: #2a2f36;
  border-radius: 6px;
}
.dock-active::after {
  content: "";
  position: absolute;
  bottom: -1px;
  left: 17px;
  width: 20px;
  height: 4px;
  border-radius: 2px;
  background: #4cc2ff;
}
.pre-text {
  font: 800 8px "Open Sans", sans-serif;
  fill: #1c2026;
  text-anchor: middle;
}
.pc-text {
  font: 700 9px "Open Sans", sans-serif;
  fill: #fff;
}
.tray {
  margin-left: 165px;
  display: flex;
  align-items: center;
  font-size: 15px;
  line-height: 20px;
}
.lang {
  width: 40px;
  margin: -2px 0 0 22px;
  text-align: center;
}
.tray-wifi {
  margin-left: 16px;
}
.tray-vol {
  margin-left: 9px;
}
.tray-bat {
  margin-left: 11px;
}
.clock {
  width: 88px;
  margin: -4px 0 0 9px;
  text-align: right;
}
.tray-bell {
  margin-left: 11px;
}
```
